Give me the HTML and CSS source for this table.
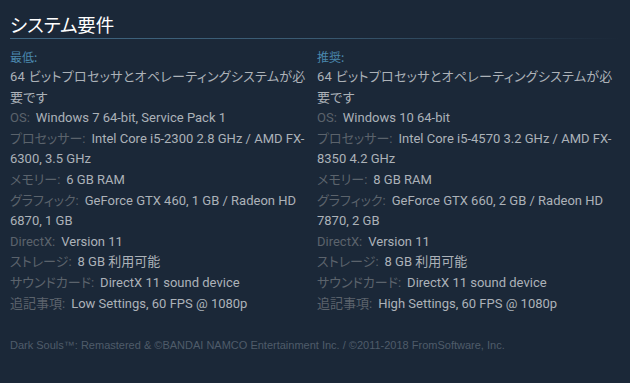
FILE: index.html
```html
<!DOCTYPE html>
<html lang="ja">
<head>
<meta charset="utf-8">
<link rel="stylesheet" href="styles.css">
</head>
<body>
<div class="sysreq">
  <h2 class="title">システム要件</h2>
  <div class="rule"></div>
  <div class="cols">
    <div class="col">
      <div class="tier">最低:</div>
      <ul class="reqs">
        <li class="note">64 ビットプロセッサとオペレーティングシステムが必要です</li>
        <li><span class="lbl">OS:</span>Windows 7 64-bit, Service Pack 1</li>
        <li><span class="lbl">プロセッサー:</span>Intel Core i5-2300 2.8 GHz / AMD FX-6300, 3.5 GHz</li>
        <li><span class="lbl">メモリー:</span>6 GB RAM</li>
        <li><span class="lbl">グラフィック:</span>GeForce GTX 460, 1 GB / Radeon HD 6870, 1 GB</li>
        <li><span class="lbl">DirectX:</span>Version 11</li>
        <li><span class="lbl">ストレージ:</span>8 GB 利用可能</li>
        <li><span class="lbl">サウンドカード:</span>DirectX 11 sound device</li>
        <li><span class="lbl">追記事項:</span>Low Settings, 60 FPS @ 1080p</li>
      </ul>
    </div>
    <div class="col">
      <div class="tier">推奨:</div>
      <ul class="reqs">
        <li class="note">64 ビットプロセッサとオペレーティングシステムが必要です</li>
        <li><span class="lbl">OS:</span>Windows 10 64-bit</li>
        <li><span class="lbl">プロセッサー:</span>Intel Core i5-4570 3.2 GHz / AMD FX-8350 4.2 GHz</li>
        <li><span class="lbl">メモリー:</span>8 GB RAM</li>
        <li><span class="lbl">グラフィック:</span>GeForce GTX 660, 2 GB / Radeon HD 7870, 2 GB</li>
        <li><span class="lbl">DirectX:</span>Version 11</li>
        <li><span class="lbl">ストレージ:</span>8 GB 利用可能</li>
        <li><span class="lbl">サウンドカード:</span>DirectX 11 sound device</li>
        <li><span class="lbl">追記事項:</span>High Settings, 60 FPS @ 1080p</li>
      </ul>
    </div>
  </div>
  <p class="legal">Dark Souls™: Remastered &amp; ©BANDAI NAMCO Entertainment Inc. / ©2011-2018 FromSoftware, Inc.</p>
</div>
</body>
</html>
```
FILE: styles.css
```css
html, body {
  margin: 0;
  padding: 0;
  background: #1b2838;
}
.sysreq {
  padding: 12px 10px 0 10px;
  font-family: Roboto, "Noto Sans CJK JP", sans-serif;
  font-feature-settings: "palt";
}
.title {
  margin: 0;
  font-family: "Noto Sans CJK JP", sans-serif;
  font-weight: normal;
  font-size: 18.5px;
  line-height: 24px;
  color: #ffffff;
}
.rule {
  margin-top: 2px;
  height: 1px;
  background: linear-gradient(to right, #3f6580 0%, #3a5a72 50%, rgba(27,40,56,0) 100%);
}
.cols {
  display: grid;
  grid-template-columns: 298px 298px;
  column-gap: 9px;
  margin-top: 8px;
}
.tier {
  font-family: "Noto Sans CJK JP", sans-serif;
  font-size: 12px;
  line-height: 20px;
  color: #4a87ad;
}
.reqs {
  list-style: none;
  margin: 0;
  padding: 0;
  font-size: 13px;
  line-height: 20.6px;
  color: #acb2b8;
}
.note {
  letter-spacing: 0.3px;
}
.lbl {
  color: #5b636c;
  margin-right: 6px;
}
.legal {
  margin: 24px 0 0 0;
  font-family: "Liberation Sans", Arial, sans-serif;
  font-size: 11px;
  line-height: 14px;
  color: #4f5c6a;
}
```
